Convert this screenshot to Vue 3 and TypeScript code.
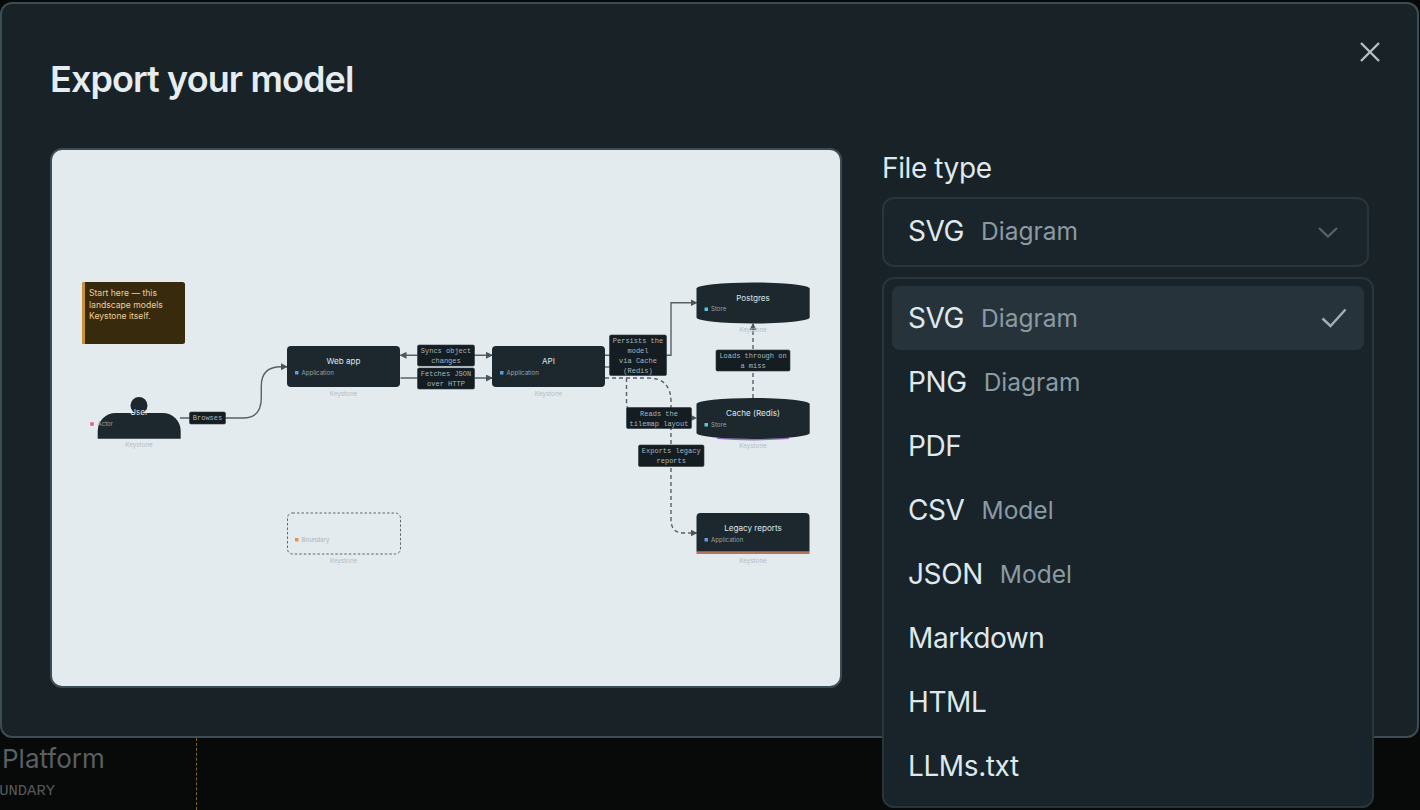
<template>
  <div class="page">
    <div class="modal">
      <button class="close" aria-label="Close">
        <svg width="22" height="22" viewBox="0 0 22 22"><path d="M2 2l18 18M20 2L2 20" /></svg>
      </button>
      <h2 class="title">Export your model</h2>
      <div class="body">
        <div class="preview">
          <svg class="diagram" viewBox="52 150 788 536" width="788" height="536">
            <defs>
              <marker id="head" markerWidth="7" markerHeight="7" refX="6" refY="3.5" orient="auto-start-reverse" markerUnits="userSpaceOnUse">
                <path d="M0 0L7 3.5L0 7z" fill="#4a565d" />
              </marker>
            </defs>

            <rect x="82" y="282" width="103" height="62" rx="2.5" class="note" />
            <path d="M84.5 282h.5v62h-.5a2.5 2.5 0 0 1-2.5-2.5v-57a2.5 2.5 0 0 1 2.5-2.5z" fill="#c9922e" />
            <text v-for="(line, i) in noteLines" :key="line" x="89" :y="296 + i * 11.5" class="note-text">{{ line }}</text>

            <path v-for="e in edges" :key="e.d" :d="e.d" class="edge" :class="{ dashed: e.dashed }" :marker-end="e.end ? 'url(#head)' : undefined" :marker-start="e.start ? 'url(#head)' : undefined" />

            <circle cx="139" cy="405.5" r="8.5" class="shape" />
            <path d="M97.7 438.7V431a18 18 0 0 1 18-18h47a18 18 0 0 1 18 18v7.7z" class="shape" />
            <template v-for="n in nodes" :key="n.name + n.cx + n.y">
              <path v-if="n.cyl && n.accent" :d="`M717 ${n.y + 40.2}Q753 ${n.y + 43} 789 ${n.y + 40.2}`" class="accent thin" :style="{ stroke: n.accent }" />
              <path v-if="n.cyl" :d="cylinder(n.y)" class="shape" />
              <rect v-else-if="n.boxed" :x="n.cx - 56.5" :y="n.y" width="113" height="41" rx="4" class="shape" />
              <path v-if="n.boxed && n.accent" :d="`M${n.cx - 56.5} ${n.y + 39.6}h113`" class="accent" :style="{ stroke: n.accent }" />
              <rect v-if="n.dotted" :x="n.cx - 56" :y="n.y" width="113" height="41" rx="5" class="boundary" />
              <text v-if="n.name" :x="n.cx" :y="n.y + 18" class="node-title">{{ n.name }}</text>
              <rect :x="n.cx - 48.5" :y="n.y + 25" width="3.5" height="3.5" :fill="n.color" />
              <text :x="n.cx - 42" :y="n.y + 28.5" class="node-kind" :class="{ faint: n.dotted }">{{ n.kind }}</text>
              <text :x="n.cx" :y="n.y + 49.5" class="node-owner">Keystone</text>
            </template>

            <text x="139" y="415" class="node-title">User</text>
            <rect x="90.3" y="422.3" width="3.5" height="3.5" fill="#e0608a" />
            <text x="97.5" y="426" class="node-kind">Actor</text>
            <text x="139" y="447" class="node-owner">Keystone</text>

            <g v-for="l in labels" :key="l.lines[0]">
              <rect :x="l.x" :y="l.y" :width="l.w" :height="l.h" rx="1.5" class="edge-box" />
              <text v-for="(line, i) in l.lines" :key="line" :x="l.x + l.w / 2" :y="l.y + 8 + i * 10" class="edge-text">{{ line }}</text>
            </g>
          </svg>
        </div>

        <div class="side">
          <div class="field-label">File type</div>
          <div class="select-wrap">
            <div class="select">
              <span class="name">SVG</span>
              <span class="hint">Diagram</span>
              <svg class="chevron" width="22" height="12" viewBox="0 0 22 12"><path d="M2 2l9 8.5L20 2" /></svg>
            </div>
            <ul class="menu">
              <li v-for="opt in options" :key="opt.name" class="option" :class="{ active: opt.name === selected }">
                <span class="name">{{ opt.name }}</span>
                <span v-if="opt.hint" class="hint">{{ opt.hint }}</span>
                <svg v-if="opt.name === selected" class="check" width="26" height="20" viewBox="0 0 26 20"><path d="M1.5 10.5l8 7.5L24.5 1.5" /></svg>
              </li>
            </ul>
          </div>
        </div>
      </div>
    </div>

    <div class="behind">
      <div class="group">
        <div class="group-name">Platform</div>
        <div class="group-kind">BOUNDARY</div>
      </div>
    </div>
  </div>
</template>

<script setup lang="ts">
interface DiagramNode {
  name: string
  kind: string
  cx: number
  y: number
  color: string
  cyl?: boolean
  boxed?: boolean
  dotted?: boolean
  accent?: string
}

const selected = 'SVG'

const options = [
  { name: 'SVG', hint: 'Diagram' },
  { name: 'PNG', hint: 'Diagram' },
  { name: 'PDF' },
  { name: 'CSV', hint: 'Model' },
  { name: 'JSON', hint: 'Model' },
  { name: 'Markdown' },
  { name: 'HTML' },
  { name: 'LLMs.txt' }
]

const noteLines = ['Start here — this', 'landscape models', 'Keystone itself.']

const nodes: DiagramNode[] = [
  { name: 'Web app', kind: 'Application', cx: 343.5, y: 346, color: '#5b9be0', boxed: true },
  { name: 'API', kind: 'Application', cx: 548.5, y: 346, color: '#5b9be0', boxed: true },
  { name: 'Postgres', kind: 'Store', cx: 753, y: 282.5, color: '#4fc8e0', cyl: true },
  { name: 'Cache (Redis)', kind: 'Store', cx: 753, y: 398, color: '#4fc8e0', cyl: true, accent: '#9a6fc0' },
  { name: 'Legacy reports', kind: 'Application', cx: 753, y: 513, color: '#5b9be0', boxed: true, accent: '#b87458' },
  { name: '', kind: 'Boundary', cx: 343.5, y: 513, color: '#e89050', dotted: true }
]

const edges = [
  { d: 'M180 418H243Q261.3 418 261.3 398V386Q261.3 366.7 281 366.7H287', end: true },
  { d: 'M400.5 355.3H492', start: true, end: true },
  { d: 'M400.5 378H492', end: true },
  { d: 'M605 355.3H671V302.7H696.5', end: true },
  { d: 'M605 367H610' },
  { d: 'M605 378H648Q671 378 671 402V520Q671 533 684 533H696.5', dashed: true, end: true },
  { d: 'M626.5 378V400Q626.5 418 640 418H696', dashed: true, end: true },
  { d: 'M753 398V324', dashed: true, end: true }
]

const labels = [
  { x: 189.5, y: 412, w: 36, h: 12, lines: ['Browses'] },
  { x: 417.5, y: 345, w: 57, h: 21, lines: ['Syncs object', 'changes'] },
  { x: 417.5, y: 368, w: 57, h: 21, lines: ['Fetches JSON', 'over HTTP'] },
  { x: 609.5, y: 335, w: 57, h: 40.5, lines: ['Persists the', 'model', 'via Cache', '(Redis)'] },
  { x: 716, y: 350, w: 74, h: 21, lines: ['Loads through on', 'a miss'] },
  { x: 626.5, y: 407.5, w: 65, h: 21, lines: ['Reads the', 'tilemap layout'] },
  { x: 638.5, y: 445, w: 65.5, h: 21.5, lines: ['Exports legacy', 'reports'] }
]

const cylinder = (y: number) =>
  `M696.5 ${y + 6}A56.6 6 0 0 1 809.7 ${y + 6}V${y + 35}A56.6 6 0 0 1 696.5 ${y + 35}Z`
</script>

<style>
html,
body {
  background: #080909;
  overflow: hidden;
}
</style>

<style scoped>
.page {
  height: 810px;
  padding-top: 2px;
  box-sizing: border-box;
  display: flex;
  flex-direction: column;
  font-family: Inter, "Noto Sans", sans-serif;
  overflow: hidden;
}

.modal {
  position: relative;
  z-index: 1;
  width: 1419px;
  height: 736px;
  flex: none;
  box-sizing: border-box;
  padding: 53px 48px 48px;
  background: #182227;
  border: 2px solid #3c4c54;
  border-radius: 12px;
  display: flex;
  flex-direction: column;
}

.close {
  position: absolute;
  top: 37px;
  right: 36px;
  width: 22px;
  height: 22px;
  padding: 0;
  background: none;
  border: none;
}

.close svg {
  display: block;
  fill: none;
  stroke: #b4c0c6;
  stroke-width: 2.4;
}

.title {
  margin: 0 0 47px;
  font-size: 36px;
  line-height: 44px;
  font-weight: 600;
  letter-spacing: -0.9px;
  color: #e6edf1;
}

.body {
  flex: 1;
  display: flex;
  gap: 40px;
  min-height: 0;
}

.preview {
  width: 788px;
  height: 536px;
  flex: none;
  background: #e4ebee;
  border: 2px solid #3c4c54;
  border-radius: 12px;
  overflow: hidden;
}

.diagram {
  display: block;
}

.note {
  fill: #382a0d;
}

.note-text {
  font-size: 8.6px;
  fill: #e8cf9a;
}

.edge {
  fill: none;
  stroke: #55626a;
  stroke-width: 1.4;
}

.edge.dashed {
  stroke-dasharray: 4 3;
}

.shape {
  fill: #1c272e;
}

.accent {
  fill: none;
  stroke-width: 2.8;
}

.accent.thin {
  stroke-width: 1.6;
}

.boundary {
  fill: none;
  stroke: #5d676d;
  stroke-width: 1;
  stroke-dasharray: 2.5 2;
}

.node-title {
  font-size: 8.1px;
  text-anchor: middle;
  fill: #dfe7ea;
}

.node-kind {
  font-size: 6.1px;
  fill: #95a4ab;
}

.node-kind.faint {
  fill: #a8b2b8;
}

.node-owner {
  font-size: 6.3px;
  text-anchor: middle;
  fill: #b2bcc1;
}

.edge-box {
  fill: #141d22;
  stroke: #2c383f;
  stroke-width: 0.6;
}

.edge-text {
  font-family: "Liberation Mono", monospace;
  font-size: 7px;
  text-anchor: middle;
  fill: #a9b6bc;
}

.side {
  flex: 1;
  min-width: 0;
  padding-top: 2px;
}

.field-label {
  font-size: 28px;
  line-height: 36px;
  margin-bottom: 11px;
  letter-spacing: -0.4px;
  color: #dfe8ec;
}

.select-wrap {
  position: relative;
}

.select {
  height: 70px;
  box-sizing: border-box;
  padding: 0 28px 2px 24px;
  display: flex;
  align-items: center;
  gap: 17px;
  background: #1a252b;
  border: 2px solid #29353c;
  border-radius: 12px;
}

.chevron {
  margin: 2px 0 0 auto;
  fill: none;
  stroke: #55636a;
  stroke-width: 2.2;
}

.menu {
  position: absolute;
  top: 80px;
  left: 0;
  z-index: 2;
  width: 492px;
  height: 531px;
  margin: 0;
  padding: 7px 8px;
  box-sizing: border-box;
  list-style: none;
  background: #18232a;
  border: 2px solid #29353c;
  border-radius: 12px;
}

.option {
  height: 64px;
  box-sizing: border-box;
  padding: 0 17px 0 16px;
  display: flex;
  align-items: center;
  gap: 17px;
  border-radius: 8px;
}

.option.active {
  background: #27333a;
}

.check {
  margin-left: auto;
  fill: none;
  stroke: #a3afb5;
  stroke-width: 2.4;
}

.name {
  font-size: 28px;
  letter-spacing: -0.4px;
  color: #dfe8ec;
}

.hint {
  font-size: 24.5px;
  color: #8b9aa2;
}

.behind {
  flex: 1;
  display: flex;
}

.group {
  width: 196.5px;
  box-sizing: border-box;
  padding-left: 2px;
  border-right: 1.5px dashed #7a6630;
}

.group-name {
  margin-top: 3px;
  font-size: 26px;
  line-height: 36px;
  color: #5a5f62;
}

.group-kind {
  margin: 5px 0 0 -21.4px;
  font-family: "Liberation Mono", monospace;
  font-size: 15.5px;
  line-height: 18px;
  color: #55595c;
}
</style>
